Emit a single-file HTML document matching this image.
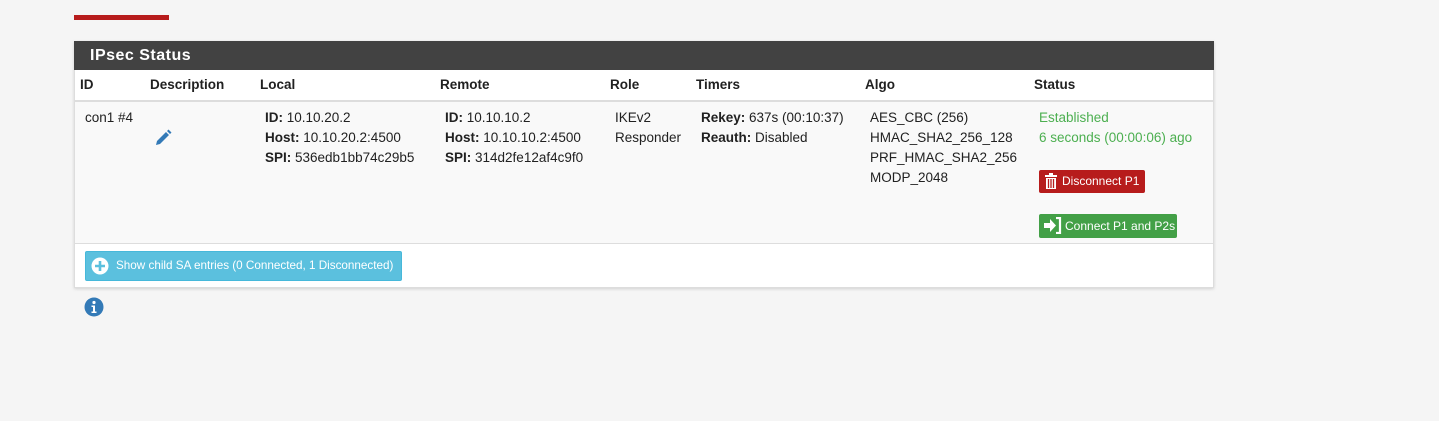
<!DOCTYPE html>
<html><head><style>
*{margin:0;padding:0;box-sizing:border-box}
body{width:1439px;height:421px;background:#f5f5f5;font-family:"Liberation Sans",sans-serif;font-size:13.5px;color:#212121;position:relative;overflow:hidden}
.a{position:absolute;white-space:nowrap}
b{font-weight:bold}
.t{line-height:20px}
</style></head><body>
<div class="a" style="left:74px;top:15px;width:95px;height:5px;background:#b71c1c"></div>
<div class="a" style="left:74px;top:41px;width:1140px;height:247px;background:#fff;border:1px solid #ddd;box-shadow:0 1px 3px rgba(0,0,0,.15)"></div>
<div class="a" style="left:74px;top:41px;width:1140px;height:29px;background:#424242;color:#fff;font-size:16px;font-weight:bold;letter-spacing:.5px;padding:6px 0 0 16px">IPsec Status</div>
<div class="a" style="left:75px;top:100px;width:1138px;height:2px;background:#ddd"></div>
<div class="a" style="left:75px;top:102px;width:1138px;height:142px;background:#f9f9f9;border-bottom:1px solid #ddd"></div>
<div class="a t" style="top:75px;left:80px;font-weight:bold">ID</div>
<div class="a t" style="top:75px;left:150px;font-weight:bold">Description</div>
<div class="a t" style="top:75px;left:260px;font-weight:bold">Local</div>
<div class="a t" style="top:75px;left:440px;font-weight:bold">Remote</div>
<div class="a t" style="top:75px;left:610px;font-weight:bold">Role</div>
<div class="a t" style="top:75px;left:696px;font-weight:bold">Timers</div>
<div class="a t" style="top:75px;left:865px;font-weight:bold">Algo</div>
<div class="a t" style="top:75px;left:1034px;font-weight:bold">Status</div>
<div class="a t" style="top:108px;left:85px">con1 #4</div>
<svg class="a" style="left:154px;top:129px" width="18" height="18" viewBox="0 0 18 18"><path d="M2 16l1-4 9-9 3 3-9 9z M13 2l1.5-1.5 3 3L16 5z" fill="#337ab7"/></svg>
<div class="a t" style="top:108px;left:265px"><b>ID:</b> 10.10.20.2<br><b>Host:</b> 10.10.20.2:4500<br><b>SPI:</b> 536edb1bb74c29b5</div>
<div class="a t" style="top:108px;left:445px"><b>ID:</b> 10.10.10.2<br><b>Host:</b> 10.10.10.2:4500<br><b>SPI:</b> 314d2fe12af4c9f0</div>
<div class="a t" style="top:108px;left:615px">IKEv2<br>Responder</div>
<div class="a t" style="top:108px;left:701px"><b>Rekey:</b> 637s (00:10:37)<br><b>Reauth:</b> Disabled</div>
<div class="a t" style="top:108px;left:870px">AES_CBC (256)<br>HMAC_SHA2_256_128<br>PRF_HMAC_SHA2_256<br>MODP_2048</div>
<div class="a t" style="top:108px;left:1039px;color:#4caf50">Established<br>6 seconds (00:00:06) ago</div>
<div class="a" style="left:1039px;top:170px;width:106px;height:23px;background:#b71c1c;border-radius:2px;color:#fff;font-size:12px;padding:4px 0 0 23px">Disconnect P1
<svg style="position:absolute;left:5px;top:2px" width="14" height="18" viewBox="0 0 14 18"><path d="M1 3h12v2H1z M5 1h4v2H5z M2 6h10v11H2z" fill="#fff"/><path d="M4.5 7v9M7 7v9M9.5 7v9" stroke="#b71c1c" stroke-width="1.3"/></svg></div>
<div class="a" style="left:1039px;top:214px;width:138px;height:24px;background:#43a047;border-radius:2px;color:#fff;font-size:12px;padding:5px 0 0 26px">Connect P1 and P2s
<svg style="position:absolute;left:4px;top:3px" width="20" height="17" viewBox="0 0 20 17"><path d="M1 6h6V2l6 6.5-6 6.5v-4H1z" fill="#fff"/><path d="M13 1h4v15h-4" fill="none" stroke="#fff" stroke-width="2.2"/></svg></div>
<div class="a" style="left:85px;top:251px;width:317px;height:30px;background:#5bc0de;border:1px solid #46b8da;border-radius:2px;color:#fff;font-size:11.7px;padding:7px 0 0 30px">Show child SA entries (0 Connected, 1 Disconnected)
<svg style="position:absolute;left:5px;top:5px" width="18" height="18" viewBox="0 0 18 18"><circle cx="9" cy="9" r="8.5" fill="#fff"/><path d="M9 4v10M4 9h10" stroke="#5bc0de" stroke-width="2.6"/></svg></div>
<svg class="a" style="left:84px;top:297px" width="20" height="20" viewBox="0 0 20 20"><circle cx="10" cy="10" r="9.5" fill="#337ab7"/><circle cx="10" cy="5.5" r="1.6" fill="#fff"/><path d="M7.5 8.5h3.5v6h1.5v1.5h-5v-1.5h1.5v-4.5h-1.5z" fill="#fff"/></svg>
</body></html>
